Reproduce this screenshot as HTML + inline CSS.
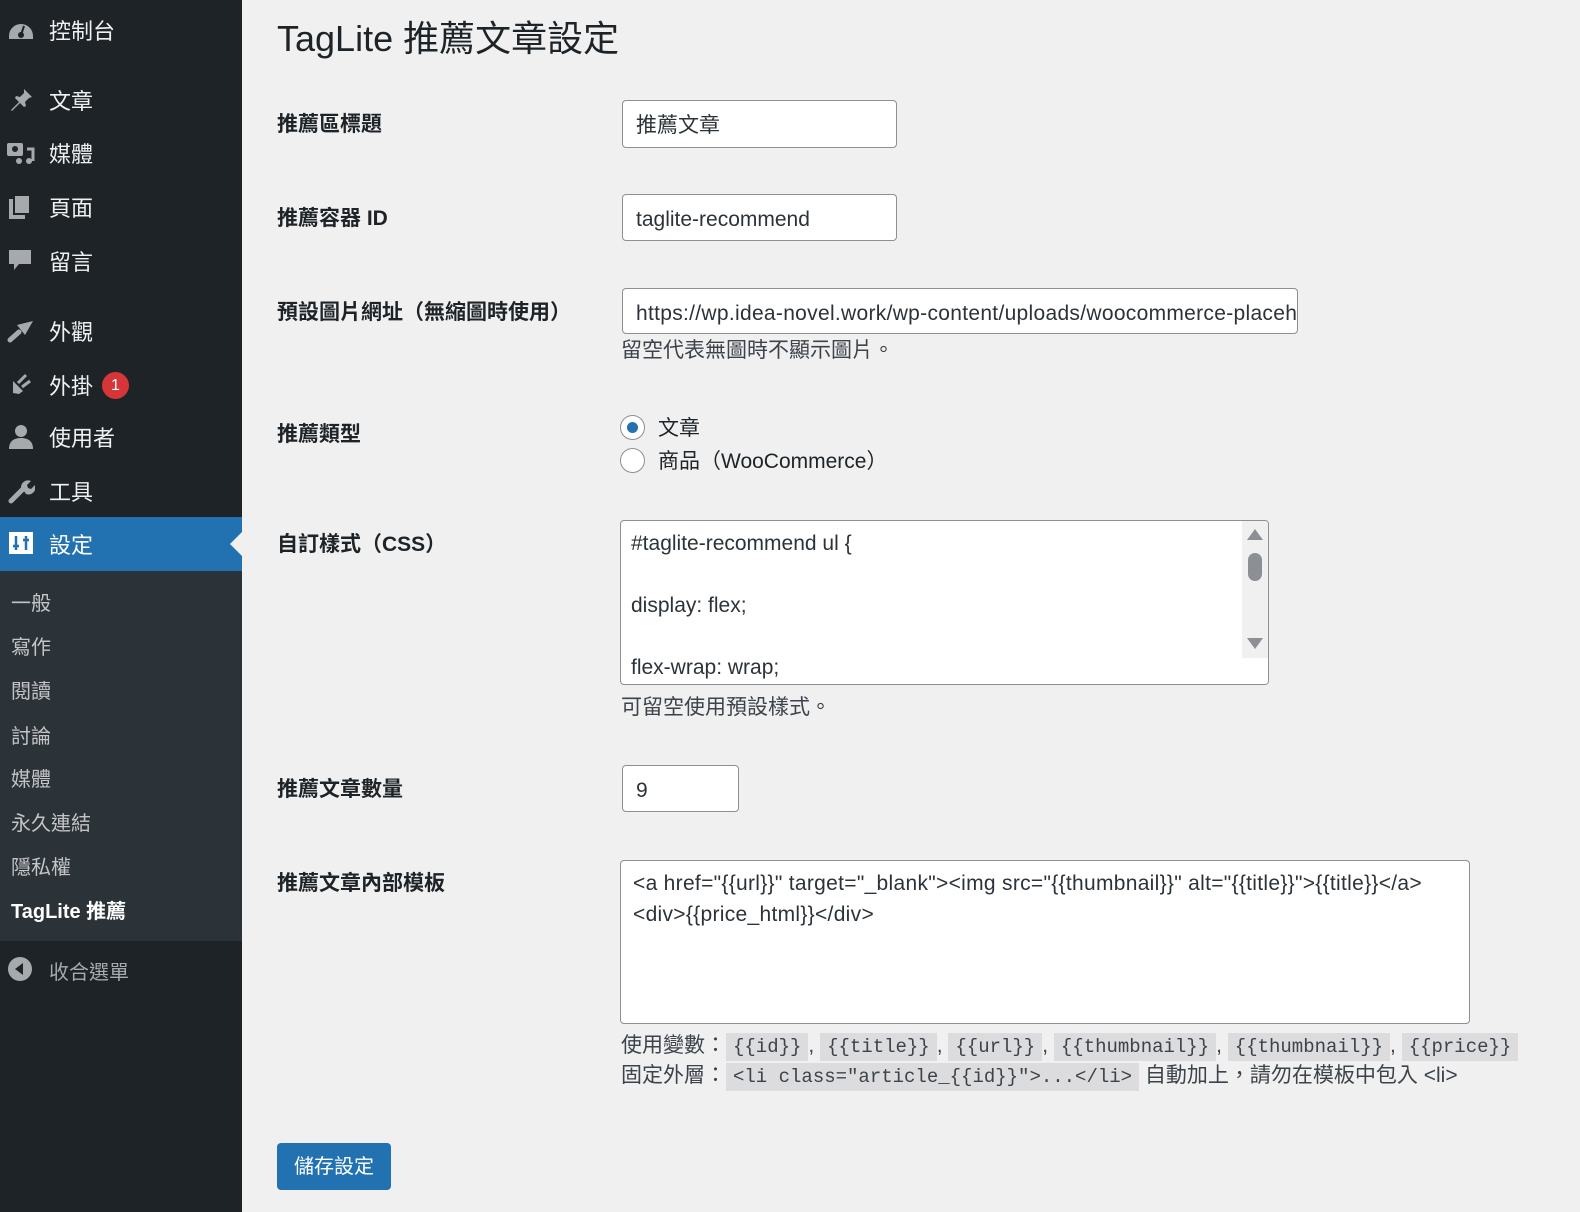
<!DOCTYPE html>
<html><head><meta charset="utf-8">
<style>
*{margin:0;padding:0;box-sizing:border-box}
body{width:1580px;height:1212px;background:#f0f0f1;font-family:"Liberation Sans","Noto Sans CJK TC",sans-serif;color:#1d2327;position:relative;overflow:hidden}
#side{position:absolute;left:0;top:0;width:242px;height:1212px;background:#1d2327}
.mi{position:absolute;left:49px;font-size:22px;color:#f0f0f1;line-height:34px}
.ic{position:absolute;left:7px;width:28px;height:28px}
.sub{position:absolute;left:0;top:571px;width:242px;height:370px;background:#2c3338}
.si{position:absolute;left:11px;font-size:20px;color:#c3c4c7;line-height:32px}
.a{position:absolute}
.lab{position:absolute;left:277px;font-size:21px;font-weight:bold;line-height:34px}
.inp{position:absolute;background:#fff;border:1px solid #8c8f94;border-radius:4px;font-size:21px;padding-left:13px;line-height:50px;color:#2c3338;overflow:hidden;white-space:nowrap}
.desc{position:absolute;left:621px;font-size:21px;color:#3c434a;line-height:34px}
code{font-family:"Liberation Mono",monospace;background:#dcdcde;padding:3px 7px;font-size:19px}
</style></head><body>
<div id="side">
  <svg class="ic" style="top:16px" viewBox="0 0 28 28"><path d="M2 20a12 12 0 0 1 24 0v3H2z" fill="#a7aaad"/><circle cx="14" cy="19" r="3" fill="#1d2327"/><path d="M14 19l3-9" stroke="#1d2327" stroke-width="2"/></svg>
  <div class="mi" style="top:15px">控制台</div>
  <svg class="ic" style="top:86px" viewBox="0 0 28 28"><path d="M17 3l8 8-3 1-4 4 1 4-2 1-4-4-8 8-1-1 8-8-4-4 1-2 4 1 4-4z" fill="#a7aaad"/></svg>
  <div class="mi" style="top:85px">文章</div>
  <svg class="ic" style="top:139px" viewBox="0 0 28 28"><rect x="0" y="4" width="16" height="13" rx="2" fill="#a7aaad"/><circle cx="8" cy="10" r="3" fill="#1d2327"/><path d="M20 10h6v12" stroke="#a7aaad" stroke-width="3" fill="none"/><circle cx="22" cy="22" r="3" fill="#a7aaad"/><circle cx="12" cy="22" r="3" fill="#a7aaad"/></svg>
  <div class="mi" style="top:138px">媒體</div>
  <svg class="ic" style="top:193px" viewBox="0 0 28 28"><rect x="2" y="6" width="16" height="20" fill="#a7aaad"/><rect x="7" y="2" width="16" height="19" fill="#a7aaad" stroke="#1d2327" stroke-width="2"/></svg>
  <div class="mi" style="top:192px">頁面</div>
  <svg class="ic" style="top:247px" viewBox="0 0 28 28"><path d="M2 3h22v14H12l-5 6v-6H2z" fill="#a7aaad"/></svg>
  <div class="mi" style="top:246px">留言</div>
  <svg class="ic" style="top:317px" viewBox="0 0 28 28"><path d="M10 8l16-4-8 14z" fill="#a7aaad"/><path d="M12 15l-9 8" stroke="#a7aaad" stroke-width="5" stroke-linecap="round"/></svg>
  <div class="mi" style="top:316px">外觀</div>
  <svg class="ic" style="top:371px" viewBox="0 0 28 28"><path d="M6 10l10 10-4 3-6-1z" fill="#a7aaad"/><path d="M11 12l8-8M15 16l8-6" stroke="#a7aaad" stroke-width="3"/></svg>
  <div class="mi" style="top:370px">外掛</div>
  <div class="a" style="left:102px;top:372px;width:27px;height:27px;border-radius:50%;background:#d63638;color:#fff;font-size:16px;text-align:center;line-height:27px">1</div>
  <svg class="ic" style="top:423px" viewBox="0 0 28 28"><circle cx="14" cy="8" r="6" fill="#a7aaad"/><path d="M2 26c0-8 5-11 12-11s12 3 12 11z" fill="#a7aaad"/></svg>
  <div class="mi" style="top:422px">使用者</div>
  <svg class="ic" style="top:477px" viewBox="0 0 28 28"><path d="M4 24L16 12" stroke="#a7aaad" stroke-width="5" stroke-linecap="round"/><path d="M14 10a7 7 0 0 1 10-6l-4 4 1 3 3 1 4-4a7 7 0 0 1-9 9z" fill="#a7aaad"/></svg>
  <div class="mi" style="top:476px">工具</div>
  <div class="a" style="left:0;top:517px;width:242px;height:54px;background:#2271b1"></div>
  <div class="a" style="left:230px;top:532px;width:0;height:0;border-top:12px solid transparent;border-bottom:12px solid transparent;border-right:12px solid #f0f0f1"></div>
  <svg class="ic" style="top:530px" viewBox="0 0 28 28"><rect x="2" y="2" width="24" height="22" fill="#fff"/><path d="M9 6v14M6 16h6M19 6v14M16 10h6" stroke="#2271b1" stroke-width="2.5"/></svg>
  <div class="mi" style="top:529px;color:#fff">設定</div>
  <div class="sub">
    <div class="si" style="top:17px">一般</div>
    <div class="si" style="top:61px">寫作</div>
    <div class="si" style="top:105px">閱讀</div>
    <div class="si" style="top:150px">討論</div>
    <div class="si" style="top:193px">媒體</div>
    <div class="si" style="top:237px">永久連結</div>
    <div class="si" style="top:281px">隱私權</div>
    <div class="si" style="top:325px;color:#fff;font-weight:bold">TagLite 推薦</div>
  </div>
  <svg class="ic" style="top:956px" viewBox="0 0 28 28"><circle cx="13" cy="13" r="12" fill="#a7aaad"/><path d="M16 7l-8 6 8 6z" fill="#1d2327"/></svg>
  <div class="mi" style="top:956px;color:#a7aaad;font-size:20px">收合選單</div>
</div>

<div class="a" style="left:277px;top:14px;font-size:36px;line-height:50px;color:#1d2327">TagLite 推薦文章設定</div>

<div class="lab" style="top:108px">推薦區標題</div>
<div class="inp" style="left:622px;top:100px;width:275px;height:48px">推薦文章</div>

<div class="lab" style="top:202px">推薦容器 ID</div>
<div class="inp" style="left:622px;top:194px;width:275px;height:47px">taglite-recommend</div>

<div class="lab" style="top:296px">預設圖片網址（無縮圖時使用）</div>
<div class="inp" style="left:622px;top:288px;width:676px;height:46px;letter-spacing:0.3px">https://wp.idea-novel.work/wp-content/uploads/woocommerce-placeholder.png</div>
<div class="desc" style="top:334px">留空代表無圖時不顯示圖片。</div>

<div class="lab" style="top:418px">推薦類型</div>
<div class="a" style="left:620px;top:415px;width:25px;height:25px;border-radius:50%;border:1px solid #8c8f94;background:#fff"><div style="position:absolute;left:6px;top:6px;width:11px;height:11px;border-radius:50%;background:#2271b1"></div></div>
<div class="a" style="left:658px;top:412px;font-size:21px;line-height:34px">文章</div>
<div class="a" style="left:620px;top:448px;width:25px;height:25px;border-radius:50%;border:1px solid #8c8f94;background:#fff"></div>
<div class="a" style="left:658px;top:445px;font-size:21px;line-height:34px">商品（WooCommerce）</div>

<div class="lab" style="top:528px">自訂樣式（CSS）</div>
<div class="a" style="left:620px;top:520px;width:649px;height:165px;background:#fff;border:1px solid #8c8f94;border-radius:4px;overflow:hidden">
  <div style="position:absolute;left:10px;top:7px;font-size:21px;line-height:31px;color:#2c3338">#taglite-recommend ul {<br><br>display: flex;<br><br>flex-wrap: wrap;</div>
  <div style="position:absolute;right:0;top:0;width:26px;height:165px;background:#f0f0f1"></div>
  <div style="position:absolute;right:5px;top:8px;border-left:8px solid transparent;border-right:8px solid transparent;border-bottom:11px solid #8c8f94"></div>
  <div style="position:absolute;right:6px;top:32px;width:14px;height:28px;border-radius:7px;background:#8c8f94"></div>
  <div style="position:absolute;right:5px;top:117px;border-left:8px solid transparent;border-right:8px solid transparent;border-top:11px solid #8c8f94"></div>
  <div style="position:absolute;right:0;bottom:0;width:26px;height:26px;background:#fff"></div>
</div>
<div class="desc" style="top:691px">可留空使用預設樣式。</div>

<div class="lab" style="top:773px">推薦文章數量</div>
<div class="inp" style="left:622px;top:765px;width:117px;height:47px">9</div>

<div class="lab" style="top:867px">推薦文章內部模板</div>
<div class="a" style="left:620px;top:860px;width:850px;height:164px;background:#fff;border:1px solid #8c8f94;border-radius:4px;padding:7px 12px;font-size:21px;line-height:31px;color:#2c3338;letter-spacing:0.3px">&lt;a href="{{url}}" target="_blank"&gt;&lt;img src="{{thumbnail}}" alt="{{title}}"&gt;{{title}}&lt;/a&gt;<br>&lt;div&gt;{{price_html}}&lt;/div&gt;</div>

<div class="desc" style="top:1029px;white-space:nowrap">使用變數：<code>{{id}}</code>, <code>{{title}}</code>, <code>{{url}}</code>, <code>{{thumbnail}}</code>, <code>{{thumbnail}}</code>, <code>{{price}}</code></div>
<div class="desc" style="top:1059px;white-space:nowrap">固定外層：<code>&lt;li class="article_{{id}}"&gt;...&lt;/li&gt;</code> 自動加上，請勿在模板中包入 &lt;li&gt;</div>

<div class="a" style="left:277px;top:1143px;width:114px;height:47px;background:#2271b1;border-radius:4px;color:#fff;font-size:20px;text-align:center;line-height:49px">儲存設定</div>
</body></html>
